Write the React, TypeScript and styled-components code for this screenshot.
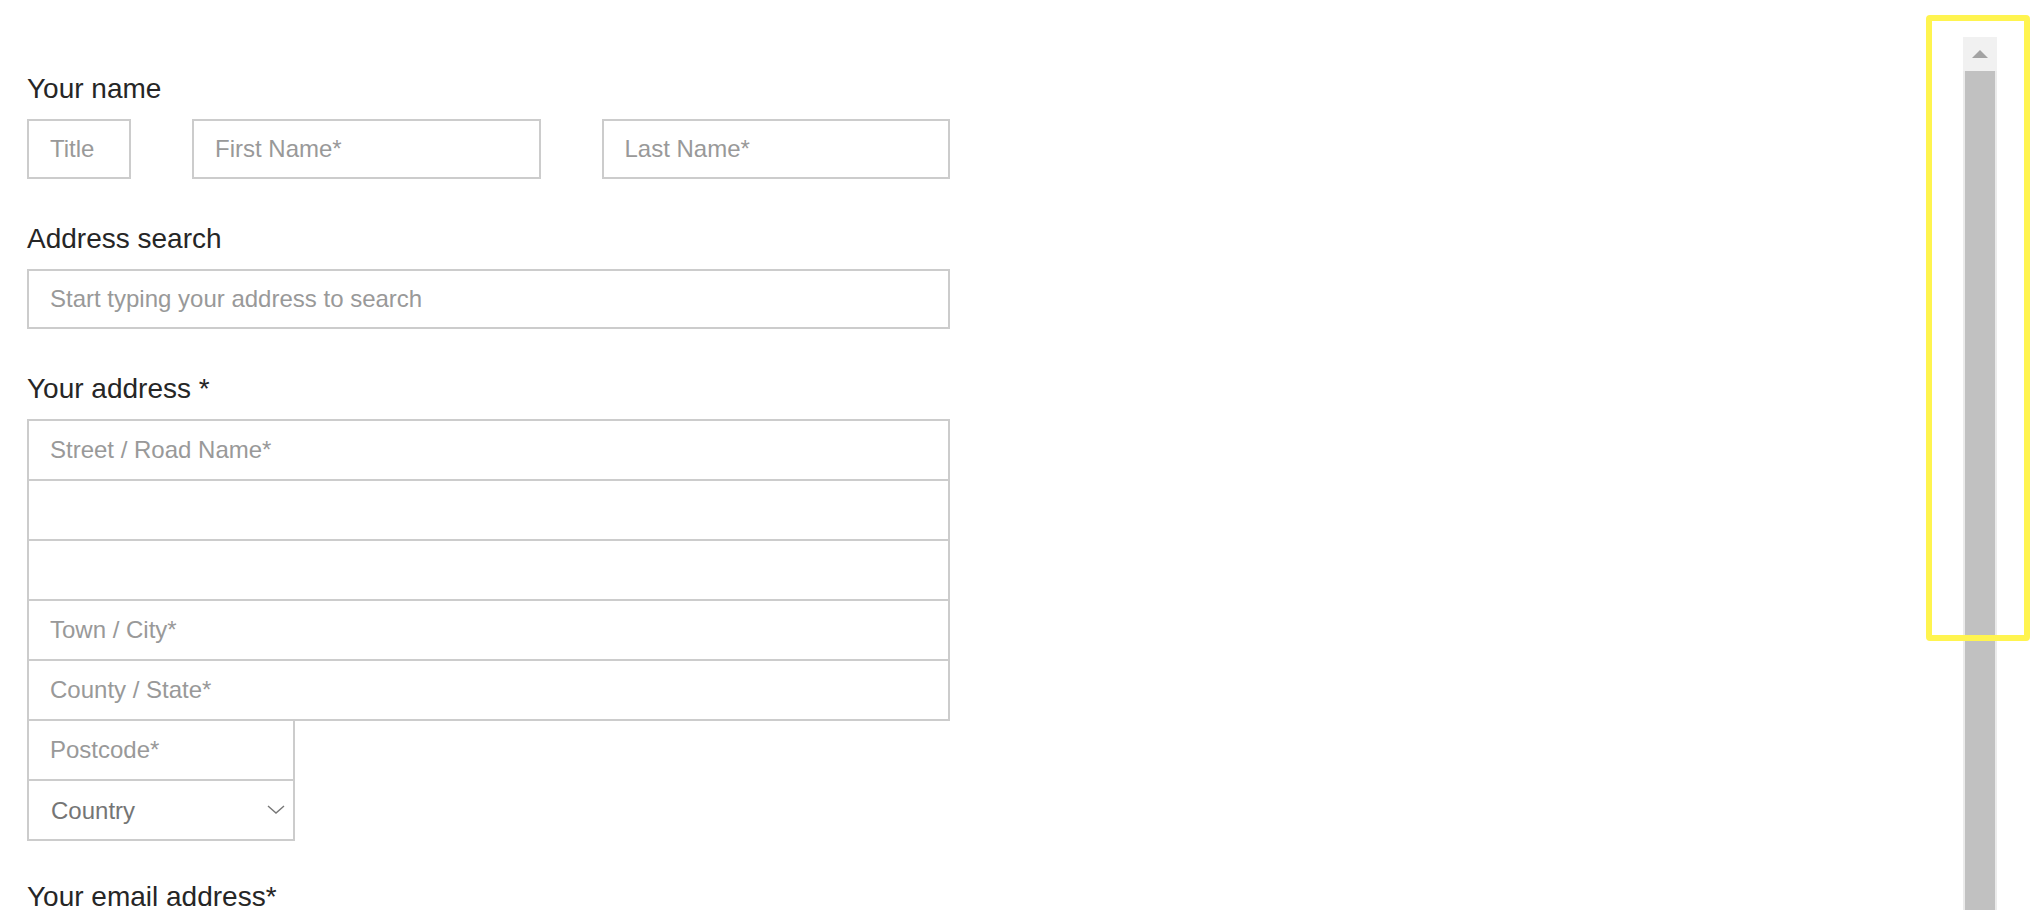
import styled, { createGlobalStyle } from "styled-components";

const GlobalStyle = createGlobalStyle`
  * {
    box-sizing: border-box;
  }
  html, body {
    margin: 0;
    padding: 0;
    background: #fff;
    font-family: "Liberation Sans", Arial, sans-serif;
  }
`;

const Page = styled.main`
  position: relative;
  display: flex;
  height: 100vh;
  overflow: hidden;
  padding: 0 33px 0 27px;
`;

const Form = styled.form`
  width: 923px;
  padding-top: 73px;
`;

const Group = styled.div<{ $gap?: number }>`
  margin-bottom: ${({ $gap }) => $gap ?? 44}px;
`;

const Label = styled.label`
  display: block;
  font-size: 28px;
  line-height: 32px;
  color: #262626;
  margin-bottom: 14px;
`;

const NameRow = styled.div`
  display: flex;
  gap: 61px;
`;

const Input = styled.input<{ $width?: number }>`
  display: block;
  width: ${({ $width }) => ($width ? `${$width}px` : "100%")};
  flex: ${({ $width }) => ($width ? "none" : "1")};
  min-width: 0;
  height: 60px;
  padding: 0 21px;
  border: 2px solid #cccccc;
  border-radius: 0;
  outline: none;
  background: #fff;
  font-family: inherit;
  font-size: 24px;
  color: #333;

  &::placeholder {
    color: #999;
  }
`;

const StackInput = styled(Input)`
  height: 62px;

  & + & {
    margin-top: -2px;
  }
`;

const SelectWrap = styled.div`
  position: relative;
  width: 268px;
  margin-top: -2px;
`;

const Select = styled.select`
  display: block;
  width: 100%;
  height: 62px;
  padding: 0 40px 0 22px;
  border: 2px solid #cccccc;
  border-radius: 0;
  appearance: none;
  background: #fff;
  font-family: inherit;
  font-size: 24px;
  color: #757575;
  outline: none;
`;

const Chevron = styled.svg`
  position: absolute;
  right: 10px;
  top: 26px;
  pointer-events: none;
`;

const Scrollbar = styled.aside`
  margin-left: auto;
  margin-top: 37px;
  width: 34px;
  display: flex;
  flex-direction: column;
  background: #ebebeb;
`;

const ScrollArrow = styled.div`
  height: 34px;
  display: flex;
  align-items: center;
  justify-content: center;
  background: #f1f1f1;
`;

const ScrollThumb = styled.div`
  flex: 1;
  margin: 0 2px;
  background: #c1c1c1;
`;

const Highlight = styled.div`
  position: absolute;
  top: 15px;
  right: 0;
  width: 104px;
  height: 626px;
  border: 6px solid #fff44f;
  border-radius: 4px;
  pointer-events: none;
`;

export default function App() {
  return (
    <>
      <GlobalStyle />
      <Page>
        <Form onSubmit={(e) => e.preventDefault()}>
          <Group>
            <Label>Your name</Label>
            <NameRow>
              <Input $width={104} placeholder="Title" />
              <Input placeholder="First Name*" />
              <Input placeholder="Last Name*" />
            </NameRow>
          </Group>

          <Group>
            <Label>Address search</Label>
            <Input placeholder="Start typing your address to search" />
          </Group>

          <Group $gap={40}>
            <Label>Your address *</Label>
            <StackInput placeholder="Street / Road Name*" />
            <StackInput />
            <StackInput />
            <StackInput placeholder="Town / City*" />
            <StackInput placeholder="County / State*" />
            <StackInput $width={268} placeholder="Postcode*" />
            <SelectWrap>
              <Select defaultValue="">
                <option value="">Country</option>
                <option value="gb">United Kingdom</option>
                <option value="us">United States</option>
              </Select>
              <Chevron width="18" height="9" viewBox="0 0 18 9">
                <polyline
                  points="1,1 9,8 17,1"
                  fill="none"
                  stroke="#777"
                  strokeWidth="1.4"
                />
              </Chevron>
            </SelectWrap>
          </Group>

          <Group>
            <Label>Your email address*</Label>
            <Input type="email" />
          </Group>
        </Form>

        <Scrollbar>
          <ScrollArrow>
            <svg width="16" height="8" viewBox="0 0 16 8">
              <polygon points="8,0 16,8 0,8" fill="#a3a3a3" />
            </svg>
          </ScrollArrow>
          <ScrollThumb />
        </Scrollbar>

        <Highlight />
      </Page>
    </>
  );
}
